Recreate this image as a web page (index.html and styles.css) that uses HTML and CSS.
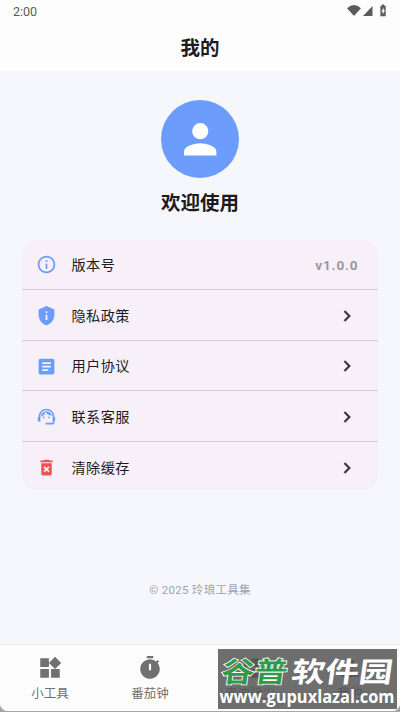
FILE: index.html
```html
<!DOCTYPE html>
<html lang="zh-CN">
<head>
<meta charset="utf-8">
<title>我的</title>
<link rel="stylesheet" href="styles.css">
</head>
<body>
<div class="screen">
  <header class="top">
    <div class="status">
      <span>2:00</span>
      <svg class="status-icons" viewBox="0 0 42 14"><path d="M0 4.2Q7-2.2 14 4.2L7 12Z"/><path d="M25.500 2V12H16Z"/><path fill-rule="evenodd" d="M33.400 1.800h1.500V.6h2.300v1.200h1.500v10.400h-5.300ZM36.700 3.500l-2.300 3.900h1.300v3l2.300-4.100h-1.300Z"/></svg>
    </div>
    <h1>我的</h1>
  </header>
  <main>
    <div class="avatar"><svg viewBox="0 0 24 24"><path d="M12 12a4 4 0 1 0 0-8 4 4 0 0 0 0 8zm0 2c-2.670 0-8 1.340-8 4v2h16v-2c0-2.660-5.330-4-8-4z"/></svg></div>
    <h2>欢迎使用</h2>
    <section class="card">
      <div class="row">
        <svg class="icon" viewBox="0 0 24 24"><path d="M11 7h2v2h-2zm0 4h2v6h-2zm1-9C6.480 2 2 6.480 2 12s4.480 10 10 10 10-4.480 10-10S17.520 2 12 2zm0 18c-4.410 0-8-3.590-8-8s3.590-8 8-8 8 3.590 8 8-3.590 8-8 8z"/></svg>
        <span class="label">版本号</span><span class="version">v1.0.0</span>
      </div>
      <div class="row">
        <svg class="icon" viewBox="0 0 24 24"><path d="M12 1 3 5v6c0 5.550 3.840 10.740 9 12 5.160-1.260 9-6.450 9-12V5l-9-4zm-1 6h2v2h-2V7zm0 4h2v6h-2v-6z"/></svg>
        <span class="label">隐私政策</span><svg class="chevron" viewBox="0 0 24 24"><path d="M10 6 8.590 7.410 13.170 12l-4.580 4.590L10 18l6-6z"/></svg>
      </div>
      <div class="row">
        <svg class="icon" viewBox="0 0 24 24"><path d="M19 3H5c-1.100 0-2 .9-2 2v14c0 1.100.9 2 2 2h14c1.100 0 2-.9 2-2V5c0-1.100-.9-2-2-2zm-5 14H7v-2h7v2zm3-4H7v-2h10v2zm0-4H7V7h10v2z"/></svg>
        <span class="label">用户协议</span><svg class="chevron" viewBox="0 0 24 24"><path d="M10 6 8.590 7.410 13.170 12l-4.580 4.590L10 18l6-6z"/></svg>
      </div>
      <div class="row">
        <svg class="icon" viewBox="0 0 24 24"><path d="M21 12.220C21 6.730 16.740 3 12 3c-4.690 0-9 3.650-9 9.280-.6.340-1 .980-1 1.720v2c0 1.100.9 2 2 2h1v-6.100c0-3.870 3.130-7 7-7s7 3.130 7 7V19h-8v2h8c1.100 0 2-.9 2-2v-1.220c.590-.310 1-.920 1-1.640v-2.300c0-.7-.410-1.310-1-1.620z"/><circle cx="9" cy="13" r="1"/><circle cx="15" cy="13" r="1"/><path d="M18 11.030C17.520 8.180 15.040 6 12.050 6c-3.030 0-6.290 2.510-6.030 6.450 2.470-1.010 4.330-3.210 4.860-5.890 1.310 2.630 4 4.440 7.120 4.470z"/></svg>
        <span class="label">联系客服</span><svg class="chevron" viewBox="0 0 24 24"><path d="M10 6 8.590 7.410 13.170 12l-4.580 4.590L10 18l6-6z"/></svg>
      </div>
      <div class="row">
        <svg class="icon danger" viewBox="0 0 24 24"><path d="M6 19c0 1.100.9 2 2 2h8c1.100 0 2-.9 2-2V7H6v12zm2.460-7.120 1.410-1.410L12 12.590l2.120-2.120 1.410 1.410L13.410 14l2.120 2.120-1.410 1.410L12 15.410l-2.120 2.120-1.410-1.410L10.590 14l-2.130-2.120zM15.500 4l-1-1h-5l-1 1H5v2h14V4z"/></svg>
        <span class="label">清除缓存</span><svg class="chevron" viewBox="0 0 24 24"><path d="M10 6 8.590 7.410 13.170 12l-4.580 4.590L10 18l6-6z"/></svg>
      </div>
    </section>
    <p class="copyright">© 2025 玲琅工具集</p>
  </main>
  <nav>
    <div class="tab"><svg viewBox="0 0 24 24"><path d="M13 13v8h8v-8h-8zM3 21h8v-8H3v8zM3 3v8h8V3H3zm13.660-1.310L11 7.340 16.660 13l5.660-5.660-5.660-5.650z"/></svg><span>小工具</span></div>
    <div class="tab"><svg viewBox="0 0 24 24"><path fill-rule="evenodd" d="M9 1h6v2H9zM19.030 7.390l1.420-1.420c-.430-.510-.9-.990-1.410-1.410l-1.420 1.420A9 9 0 1 0 19.030 7.390zM13 14h-2V8h2z"/></svg><span>番茄钟</span></div>
    <div class="tab"><svg viewBox="0 0 24 24"><path d="M4 3h7v8H4zm9 0h7v8h-7zM4 13h7v8H4zm9 0h7v8h-7z"/></svg><span>声波除尘</span></div>
    <div class="tab active"><svg viewBox="0 0 24 24"><path d="M12 12a4 4 0 1 0 0-8 4 4 0 0 0 0 8zm0 2c-2.670 0-8 1.340-8 4v2h16v-2c0-2.660-5.330-4-8-4z"/></svg><span>我的</span></div>
  </nav>
</div>
<div class="watermark">
  <svg viewBox="0 0 179 60"><g transform="translate(6 0) skewX(-8)"><text class="brand green" x="1" y="33" textLength="66" lengthAdjust="spacingAndGlyphs">谷普</text><text class="brand" x="71" y="33" textLength="101" lengthAdjust="spacingAndGlyphs">软件园</text></g><text class="url" x="1.500" y="54" textLength="175" lengthAdjust="spacingAndGlyphs">www.gupuxlazal.com</text></svg>
</div>
</body>
</html>
```
FILE: styles.css
```css
* { box-sizing: border-box; }
body {
  margin: 0;
  background: #a6a6a6;
  font-family: Roboto, "Noto Sans CJK SC", sans-serif;
  color: #1d1b20;
}
.screen {
  height: 711px;
  display: flex;
  flex-direction: column;
  background: #f5f7fc;
  border-radius: 0 0 8px 8px;
  overflow: hidden;
}
.top { height: 71px; background: #fdfdfe; }
.status {
  height: 24px;
  padding: 0 12px 1px 13px;
  display: flex;
  justify-content: space-between;
  align-items: center;
  font-size: 12.500px;
  color: #5b5b5b;
}
.status-icons { width: 42px; height: 14px; fill: #5c5c5c; margin-right: -1px; margin-top: -1px; }
h1, h2 { margin: 0; text-align: center; font-weight: 600; font-size: 19.500px; line-height: 28px; }
h1 { padding-top: 11px; }
main { flex: 1; }
.avatar {
  width: 78px;
  height: 78px;
  margin: 29px auto 0;
  border-radius: 50%;
  background: #6c9dfd;
  display: flex;
  justify-content: center;
  align-items: center;
}
.avatar svg { width: 48.500px; height: 48.500px; fill: #fff; }
h2 { margin-top: 12px; }
.card {
  margin: 22px 22px 0;
  height: 250px;
  display: grid;
  grid-template-rows: 50px 50.700px 50.700px 50.700px 1fr;
  background: #f7f0f9;
  border-radius: 14px;
}
.row {
  display: flex;
  align-items: center;
  padding: 1.500px 20px 0 14px;
  border-bottom: 1.500px solid #d2cbd4;
}
.row:first-child { padding-top: 0; }
.row:last-child { border-bottom: 0; padding-top: 3px; }
.icon { width: 21px; height: 21px; fill: #6c9dfd; }
.danger { fill: #ef5151; }
.label { flex: 1; margin-left: 14.500px; font-size: 14.200px; line-height: 20px; letter-spacing: .4px; }
.version { font-size: 13.500px; font-weight: 700; letter-spacing: .9px; margin-right: -.5px; color: #9a979d; }
.chevron { width: 22px; height: 22px; fill: #353239; stroke: #353239; stroke-width: .4; }
.copyright { margin: 91px 0 0; text-align: center; font-size: 11.500px; line-height: 18px; letter-spacing: .3px; color: #a3a4a8; }
nav {
  height: 67px;
  display: grid;
  grid-template-columns: repeat(4, 1fr);
  background: #fdfdfe;
  border-top: 1px solid #eceef2;
}
.tab { display: flex; flex-direction: column; align-items: center; padding-top: 10px; font-size: 12.500px; line-height: 18px; color: #707070; }
.tab svg { width: 26px; height: 26px; margin-bottom: 4px; fill: currentColor; }
.active { color: #534a80; }
.watermark {
  position: absolute;
  left: 218px;
  top: 649px;
  width: 179px;
  height: 60px;
  background: rgba(82, 82, 82, .84);
}
.watermark svg { display: block; width: 179px; height: 60px; overflow: visible; }
.brand { font: 700 28px "Noto Sans CJK SC", sans-serif; fill: #fff; }
.green { fill: #2f9a4a; stroke: #fff; stroke-width: 1.600px; paint-order: stroke; }
.url { font: 700 17px "Open Sans", sans-serif; fill: #fff; }
```
